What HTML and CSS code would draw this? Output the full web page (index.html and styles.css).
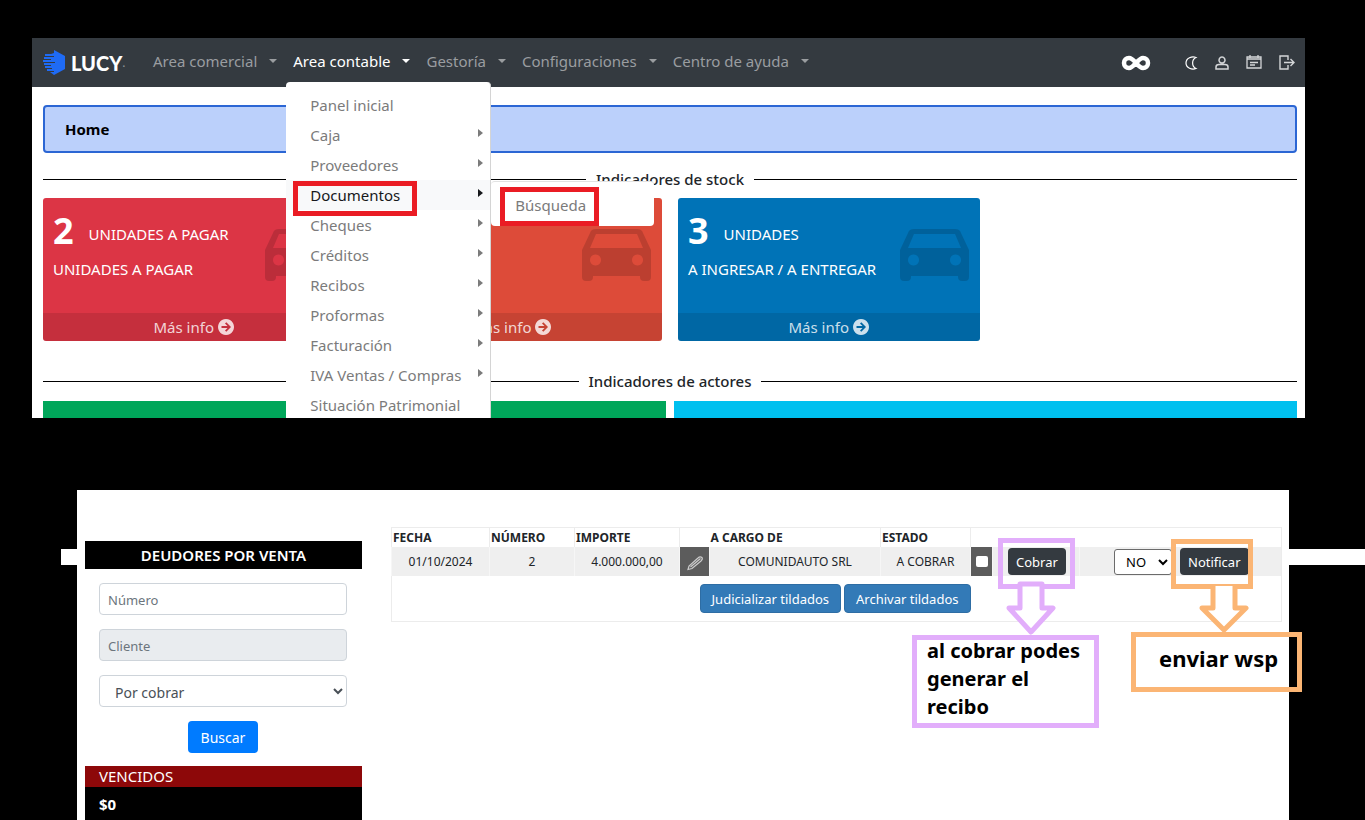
FILE: index.html
```html
<!DOCTYPE html>
<html lang="es">
<head>
<meta charset="utf-8">
<title>Lucy</title>
<link rel="stylesheet" href="styles.css">
</head>
<body>
<svg class="defs" width="0" height="0" aria-hidden="true">
  <symbol id="car" viewBox="0 0 69 52"><path fill-rule="evenodd" d="M14 0H55Q60 0 61 4L69 21V48Q69 52 65 52H62Q58 52 58 48V47H11V48Q11 52 7 52H4Q0 52 0 48V21L8 4Q9 0 14 0ZM14 5L8 19H61L55 5ZM13.500 25.500a5.500 5.500 0 1 0 .01 0ZM55.500 25.500a5.500 5.500 0 1 0 .01 0Z"/></symbol>
  <symbol id="go" viewBox="0 0 16 16"><path fill-rule="evenodd" d="M8 0a8 8 0 1 0 .01 0ZM3.500 7H9.500L7 4.500L8.300 3.200L13 8L8.300 12.800L7 11.500L9.500 9H3.500Z"/></symbol>
</svg>

<section class="app">
  <header class="topbar">
    <a class="brand" href="#" aria-label="Lucy">
      <svg class="brand-mark" viewBox="0 0 23 25" aria-hidden="true"><path fill="#1f6bf5" d="M11 0L22 6V19L11 25L7 22H11V21H4V19H9V18H2V16H8V15H1V13H12V12H0V10H8V9H1V7H11V6H2V4H8L11 3Z"/></svg>
      <span class="brand-name">Lucy</span><span class="brand-dot">.</span>
    </a>
    <nav>
      <ul class="menu">
        <li><a class="caret" href="#">Area comercial</a></li>
        <li><a class="caret active" href="#">Area contable</a>
          <ul class="dropdown">
            <li><a href="#">Panel inicial</a></li>
            <li><a class="more" href="#">Caja</a></li>
            <li><a class="more" href="#">Proveedores</a></li>
            <li><a class="more open" href="#">Documentos</a><span class="mark mark-docs"></span>
              <ul class="submenu">
                <li><a href="#">Búsqueda</a><span class="mark mark-search"></span></li>
              </ul>
            </li>
            <li><a class="more" href="#">Cheques</a></li>
            <li><a class="more" href="#">Créditos</a></li>
            <li><a class="more" href="#">Recibos</a></li>
            <li><a class="more" href="#">Proformas</a></li>
            <li><a class="more" href="#">Facturación</a></li>
            <li><a class="more" href="#">IVA Ventas / Compras</a></li>
            <li><a href="#">Situación Patrimonial</a></li>
          </ul>
        </li>
        <li><a class="caret" href="#">Gestoría</a></li>
        <li><a class="caret" href="#">Configuraciones</a></li>
        <li><a class="caret" href="#">Centro de ayuda</a></li>
      </ul>
    </nav>
    <div class="tools">
      <a href="#" class="infinity" aria-label="Infinito"><svg width="30" height="16" viewBox="0 0 30 16"><path d="M15 8C12 4.500 10.500 3 8 3A5 5 0 0 0 8 13C13 13 17 3 22 3A5 5 0 0 1 22 13C19.500 13 18 11.500 15 8" fill="none" stroke="#fff" stroke-width="4.500"/></svg></a>
      <a href="#" aria-label="Modo oscuro"><svg width="14" height="16" viewBox="0 0 14 16"><path d="M12 2.500C8 1 2 3 2 8S8 15 12 13.500C7.500 11.500 7.500 4.500 12 2.500Z" fill="none" stroke="#fff" stroke-width="1.200"/></svg></a>
      <a href="#" aria-label="Usuario"><svg width="14" height="16" viewBox="0 0 14 16"><path d="M7 2a3 3 0 1 0 .01 0ZM1 14V12Q1 9.500 4 9.500H10Q13 9.500 13 12V14Z" fill="none" stroke="#d4d6d8" stroke-width="1.500"/></svg></a>
      <a href="#" aria-label="Agenda"><svg width="16" height="16" viewBox="0 0 16 16"><path d="M1 2H15V13H1ZM1 4H15M4 0V3M12 0V3M4 7.500H12M4 10H9" fill="none" stroke="#d4d6d8" stroke-width="1.300"/></svg></a>
      <a href="#" aria-label="Salir"><svg width="16" height="16" viewBox="0 0 16 16"><path d="M9 5V1H1V14H9V10M5 7.500H15M11.500 4L15 7.500L11.500 11" fill="none" stroke="#d4d6d8" stroke-width="1.400"/></svg></a>
    </div>
  </header>
  <main class="content">
    <h1 class="crumb">Home</h1>
    <h2 class="divider">Indicadores de stock</h2>
    <div class="cards">
      <article class="card red">
        <div class="card-body">
          <p class="figure"><strong>2</strong><span>UNIDADES A PAGAR</span></p>
          <p>UNIDADES A PAGAR</p>
          <svg class="car"><use href="#car"/></svg>
        </div>
        <a class="card-foot" href="#">Más info <svg width="16" height="16"><use href="#go"/></svg></a>
      </article>
      <article class="card orange">
        <div class="card-body">
          <p class="figure"><strong>0</strong><span>UNIDADES</span></p>
          <p>EN STOCK TOTAL</p>
          <svg class="car"><use href="#car"/></svg>
        </div>
        <a class="card-foot" href="#">Más info <svg width="16" height="16"><use href="#go"/></svg></a>
      </article>
      <article class="card blue">
        <div class="card-body">
          <p class="figure"><strong>3</strong><span>UNIDADES</span></p>
          <p>A INGRESAR / A ENTREGAR</p>
          <svg class="car"><use href="#car"/></svg>
        </div>
        <a class="card-foot" href="#">Más info <svg width="16" height="16"><use href="#go"/></svg></a>
      </article>
    </div>
    <h2 class="divider second">Indicadores de actores</h2>
    <div class="actors"><div class="actor green"></div><div class="actor cyan"></div></div>
  </main>
</section>

<div class="stage">
<section class="debtors">
  <aside class="side">
    <h2 class="side-title">DEUDORES POR VENTA</h2>
    <form class="filters">
      <input type="text" placeholder="Número" aria-label="Número">
      <input type="text" placeholder="Cliente" aria-label="Cliente" disabled>
      <select aria-label="Estado"><option>Por cobrar</option></select>
      <button type="button" class="search">Buscar</button>
    </form>
    <h3 class="due">VENCIDOS</h3>
    <p class="due-total">$0</p>
  </aside>
  <table class="grid">
    <colgroup><col class="c-date"><col class="c-num"><col class="c-amount"><col class="c-edit"><col class="c-name"><col class="c-state"><col class="c-check"><col class="c-pay"><col></colgroup>
    <thead>
      <tr><th>FECHA</th><th>NÚMERO</th><th>IMPORTE</th><th></th><th class="joined">A CARGO DE</th><th>ESTADO</th><th></th><th class="joined"></th><th class="joined"></th></tr>
    </thead>
    <tbody>
      <tr>
        <td>01/10/2024</td><td>2</td><td>4.000.000,00</td>
        <td class="dark"><button type="button" class="edit" aria-label="Editar"><svg width="18" height="18" viewBox="0 0 18 18"><path d="M2 16.500L3 13L12 5Q14 3 16 4.500Q17 6 15 8L6 15.500ZM4.500 14L14.500 5.500" fill="none" stroke="#ccc" stroke-width="1.200"/></svg></button></td>
        <td>COMUNIDAUTO SRL</td><td>A COBRAR</td>
        <td class="dark"><input type="checkbox" aria-label="Tildar documento"></td>
        <td class="pay"><button type="button" class="act">Cobrar</button>
          <span class="frame frame-pay"></span>
          <svg class="arrow arrow-pay" width="50" height="56" viewBox="0 0 50 56"><path d="M14 3V27H3L25 51L47 27H36V3Z" fill="#fff" stroke="#e2aefb" stroke-width="5" stroke-linejoin="round"/></svg>
          <p class="note note-pay">al cobrar podes generar el recibo</p>
        </td>
        <td class="notify"><div class="notify-row"><select aria-label="Notificado"><option>NO</option></select><div class="send"><button type="button" class="act">Notificar</button>
          <span class="frame frame-send"></span>
          <svg class="arrow arrow-send" width="50" height="50" viewBox="0 0 50 50"><path d="M14 -2V22H3L25 44L47 22H36V-2" fill="#fff" stroke="#fbb574" stroke-width="5" stroke-linejoin="round"/></svg>
          <p class="note note-send">enviar wsp</p></div></div>
        </td>
      </tr>
    </tbody>
    <tfoot>
      <tr><td colspan="6"><div class="bulk"><button type="button">Judicializar tildados</button><button type="button">Archivar tildados</button></div></td><td colspan="3"></td></tr>
    </tfoot>
  </table>
</section>
</div>
</body>
</html>
```
FILE: styles.css
```css
* { box-sizing: border-box; }
body {
  margin: 0;
  padding-top: 38px;
  background: #000;
  color: #212529;
  font: 15px/20px "Noto Sans", "Open Sans", sans-serif;
  overflow: hidden;
}
h1, h2, h3, p, ul { margin: 0; padding: 0; }
ul { list-style: none; }
a { color: inherit; text-decoration: none; }
button, input, select { font: inherit; }
.defs { position: absolute; }

.app {
  margin: 0 60px 0 32px;
  background: #fff;
  position: relative;
  overflow: hidden;
}
.topbar {
  display: flex;
  align-items: center;
  height: 49px;
  padding: 0 10px 0 11px;
  background: #343a40;
}
.brand { display: flex; align-items: center; color: #fff; width: 102px; }
.brand-mark { width: 23px; height: 25px; margin-right: 5px; }
.brand-name { font: 900 22px/24px Lato, sans-serif; text-transform: uppercase; }
.brand-name { font-size: 20px; }
.brand-dot { color: #8d9399; font-size: 12px; }
.menu { display: flex; margin-bottom: 4px; }
.menu > li { position: relative; padding: 0 8px; color: #9a9da0; }
.caret { display: flex; align-items: center; gap: 12px; }
.caret::after {
  content: "";
  border: 4px solid transparent;
  border-top-color: currentColor;
  border-bottom: 0;
}
.active { color: #fff; }
.tools { display: flex; align-items: center; gap: 17px; margin-left: auto; }
.tools a { display: flex; }
.infinity { margin-right: 16px; }

.dropdown {
  position: absolute;
  z-index: 2;
  top: 31px;
  left: 1px;
  width: 205px;
  padding: 8px 0;
  background: #fff;
  border-right: 1px solid #d4d4d4;
  border-radius: 4px;
  color: #7b7b7b;
}
.dropdown li { position: relative; }
.dropdown a { display: block; padding: 5px 24px; white-space: nowrap; }
.dropdown .more::after {
  content: "";
  position: absolute;
  right: 7px;
  top: 9px;
  border: 4px solid transparent;
  border-left: 5px solid currentColor;
  border-right: 0;
}
.dropdown .open { background: #f8f9fa; color: #16181b; }
.submenu {
  position: absolute;
  top: 1px;
  left: 205px;
  width: 163px;
  padding: 8px 0 6px;
  background: #fff;
  border-top: 1px solid #e2e2e2;
  border-radius: 4px;
}
.mark { position: absolute; border: 5px solid #ea1c24; }
.mark-docs { left: 7px; top: 1px; width: 124px; height: 35px; }
.mark-search { left: 9px; top: -3px; width: 99px; height: 39px; }

.content { padding: 18px 8px 0 11px; }
.crumb {
  padding: 12px 20px;
  border: 2px solid #2b66d4;
  border-radius: 4px;
  background: #bbd0fb;
  color: #000;
  font-size: 15px;
  line-height: 20px;
}
.divider {
  display: flex;
  align-items: center;
  gap: 10px;
  margin: 16px 0 9px;
  font-size: 15px;
  font-weight: 500;
  line-height: 20px;
}
.divider::before, .divider::after { content: ""; flex: 1; height: 1px; background: #000; }
.second { margin: 30px 0 10px; }
.cards { display: grid; grid-template-columns: repeat(4, 1fr); gap: 16px; }
.card { border-radius: 3px; overflow: hidden; color: #fff; }
.card-body { position: relative; padding: 12px 10px 34px; }
.figure { display: flex; align-items: center; gap: 15px; margin-bottom: 7px; }
.figure strong { font-size: 36px; line-height: 42px; }
.figure span { padding-top: 6px; }
.car { position: absolute; right: 11px; top: 31px; width: 69px; height: 52px; fill: rgba(0, 0, 0, .15); }
.card-foot {
  display: flex;
  align-items: center;
  justify-content: center;
  gap: 4px;
  height: 28px;
  background: rgba(0, 0, 0, .1);
  color: rgba(255, 255, 255, .8);
}
.card-foot svg { fill: currentColor; }
.red { background: #dc3545; }
.orange { background: #dd4b39; }
.blue { background: #0073b7; }
.actors { display: grid; grid-template-columns: 1fr 1fr; gap: 8px; }
.actor { height: 17px; }
.green { background: #00a65a; }
.cyan { background: #00c0ef; }

.stage { position: relative; margin-top: 72px; padding: 0 76px 0 77px; }
.stage::before {
  content: "";
  position: absolute;
  left: 61px;
  right: 0;
  top: 59px;
  height: 16px;
  background: #fff;
}
.debtors {
  position: relative;
  display: flex;
  align-items: flex-start;
  gap: 29px;
  padding: 37px 7px 0 8px;
  background: #fff;
}
.side { flex: 0 0 277px; margin-top: 14px; }
.side-title { background: #000; color: #fff; font-size: 15px; font-weight: 600; line-height: 28px; text-align: center; }
.filters { display: flex; flex-direction: column; gap: 14px; padding: 14px 15px 13px 14px; }
.filters input, .filters select {
  width: 100%;
  height: 32px;
  padding: 2px 8px 0;
  border: 1px solid #ced4da;
  border-radius: 4px;
  background: #fff;
  color: #495057;
  font-size: 13px;
}
.filters select { padding-left: 11px; font-size: 14px; }
.filters input:disabled { background: #e9ecef; }
.filters ::placeholder { color: #6c757d; }
.search {
  align-self: center;
  width: 70px;
  height: 32px;
  padding: 2px 0 0;
  border: 0;
  border-radius: 4px;
  background: #007bff;
  color: #fff;
  font-size: 14px;
}
.due { padding: 0 14px; background: #8d0809; color: #fff; font-size: 15px; font-weight: 400; line-height: 21px; }
.due-total { padding: 7px 14px 20px; background: #000; color: #fff; font-size: 15px; font-weight: 700; }

.grid { flex: 1; table-layout: fixed; border-collapse: collapse; border: 1px solid #ececec; font-size: 12px; }
.grid th, .grid td { padding: 0 1px; border-left: 1px solid #ececec; text-align: center; }
.grid th { height: 19px; padding-top: 1px; text-align: left; line-height: 18px; }
.grid .joined { border-left: 0; }
.grid tbody tr { background: #efefef; }
.grid tbody td { height: 29px; border-color: #f6f6f6; }
.grid tbody .dark { padding: 0; background: #5c5c5c; }
.c-date { width: 98px; }
.c-num { width: 85px; }
.c-amount { width: 105px; }
.c-edit { width: 30px; }
.c-name { width: 171px; }
.c-state { width: 90px; }
.c-check { width: 22px; }
.c-pay { width: 87px; }
.edit { display: block; margin: 0 auto; padding: 0; border: 0; background: none; }
.edit svg { display: block; }
.dark input { display: block; appearance: none; width: 12px; height: 11px; margin: 0 auto; border-radius: 2px; background: #fff; }
.grid .pay { position: relative; padding: 0 0 0 15px; text-align: left; }
.act { height: 27px; padding: 0 8px; border: 0; border-radius: 4px; background: #343a40; color: #fff; font-size: 13px; }
.grid .notify { padding: 0; }
.notify-row { display: flex; align-items: center; padding-left: 34px; gap: 8px; }
.notify select { width: 58px; height: 26px; padding: 0 0 0 7px; border: 1px solid #6b6b6b; border-radius: 3px; background: #fff; font-size: 13px; }
.send { position: relative; }
.bulk { display: flex; justify-content: flex-end; gap: 3px; padding: 8px 0; }
.grid tfoot td { border: 0; padding: 0; }
.bulk button { height: 29px; padding: 1px 11px 0; border: 1px solid #2e6da4; border-radius: 4px; background: #337ab7; color: #fff; font-size: 13px; }

.frame { position: absolute; border: 5px solid #e2aefb; }
.frame-pay { left: 5px; top: -9px; width: 77px; height: 51px; }
.frame-send { left: -9px; top: -9px; width: 82px; height: 50px; border-color: #fbb574; }
.arrow { position: absolute; }
.arrow-pay { left: 13px; top: 34px; }
.arrow-send { left: 19px; top: 38px; }
.note { position: absolute; box-shadow: inset 0 0 0 5px #e2aefb; color: #000; font-size: 20px; font-weight: 700; line-height: 28px; text-align: left; }
.note-pay { left: -81px; top: 88px; width: 187px; height: 93px; padding: 2px 15px; }
.note-send { left: -49px; top: 84px; width: 171px; height: 60px; padding: 12px 0 0 28px; box-shadow: inset 0 0 0 5px #fbb574; font-size: 22px; white-space: nowrap; }
```
